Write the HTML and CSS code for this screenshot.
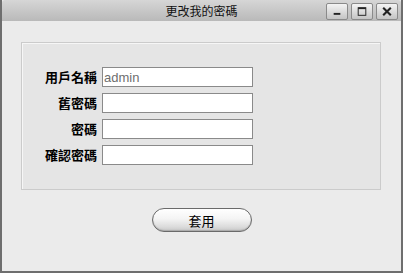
FILE: index.html
```html
<!DOCTYPE html>
<html lang="zh-Hant">
<head>
<meta charset="utf-8">
<title>更改我的密碼</title>
<link rel="stylesheet" href="styles.css">
</head>
<body>
<div class="window">
  <div class="titlebar">
    <div class="title">更改我的密碼</div>
    <div class="controls">
      <span class="ctl"><svg width="21" height="17" viewBox="0 0 21 17"><rect x="7" y="10" width="7" height="2" fill="#222"/></svg></span>
      <span class="ctl"><svg width="21" height="17" viewBox="0 0 21 17"><rect x="6.5" y="4.5" width="8" height="8" fill="none" stroke="#222" stroke-width="1"/><rect x="6.5" y="4.5" width="8" height="1.5" fill="#222"/></svg></span>
      <span class="ctl"><svg width="21" height="17" viewBox="0 0 21 17"><path d="M6.5 4.5 L14.5 12.5 M14.5 4.5 L6.5 12.5" stroke="#222" stroke-width="2.2"/></svg></span>
    </div>
  </div>
  <div class="content">
    <div class="panel">
      <div class="form">
        <label class="lbl">用戶名稱</label><input class="field" type="text" value="admin">
        <label class="lbl">舊密碼</label><input class="field" type="password">
        <label class="lbl">密碼</label><input class="field" type="password">
        <label class="lbl">確認密碼</label><input class="field" type="password">
      </div>
    </div>
    <div class="actions">
      <button class="apply">套用</button>
    </div>
  </div>
</div>
</body>
</html>
```
FILE: styles.css
```css
html, body {
  margin: 0;
  padding: 0;
  width: 403px;
  height: 273px;
  overflow: hidden;
  background: #ebebeb;
  font-family: "Noto Sans CJK TC", "Liberation Sans", sans-serif;
}
.window {
  box-sizing: border-box;
  width: 403px;
  height: 273px;
  border-left: 2px solid #6e6e6e;
  border-right: 2px solid #6e6e6e;
  border-bottom: 2px solid #6e6e6e;
  background: #ebebeb;
  display: flex;
  flex-direction: column;
}
.titlebar {
  height: 21px;
  flex: none;
  background: linear-gradient(#d6d6d6, #b9b9b9);
  border-top-left-radius: 3px;
  border-top-right-radius: 3px;
  display: flex;
  align-items: center;
  justify-content: center;
  position: relative;
}
.title {
  font-size: 12px;
  line-height: 21px;
  color: #111;
}
.controls {
  position: absolute;
  right: 3px;
  top: 3px;
  display: flex;
  gap: 3px;
}
.ctl {
  box-sizing: border-box;
  width: 22px;
  height: 17px;
  border: 1px solid #8a8a8a;
  border-radius: 2px;
  background: linear-gradient(#f4f4f4, #c4c4c4);
  display: flex;
  align-items: center;
  justify-content: center;
}
.ctl svg { display: block; }
.content {
  flex: 1;
  padding: 21px 20px 0 19px;
  display: flex;
  flex-direction: column;
}
.panel {
  box-sizing: border-box;
  height: 148px;
  border: 1px solid #cbcbcb;
  box-shadow: inset 1px 1px 0 #f6f6f6;
  background: #e5e5e5;
  padding: 24px 0 0 0;
}
.form {
  display: grid;
  grid-template-columns: 75px 151px;
  column-gap: 5px;
  row-gap: 6px;
  align-items: center;
}
.lbl {
  text-align: right;
  font-size: 13px;
  font-weight: bold;
  color: #000;
  line-height: 20px;
}
.field {
  box-sizing: border-box;
  width: 151px;
  height: 20px;
  margin: 0;
  padding: 0 1px;
  border: 1px solid #8a8a8a;
  background: #fff;
  font-family: "Liberation Sans", Arial, sans-serif;
  font-size: 13px;
  color: #6e6e6e;
  outline: none;
}
.actions {
  display: flex;
  justify-content: center;
  padding-top: 18px;
  padding-left: 1px;
}
.apply {
  box-sizing: border-box;
  width: 100px;
  height: 24px;
  border: 1px solid #6a6a6a;
  border-radius: 12px;
  background: linear-gradient(#ffffff 0%, #f4f4f4 45%, #dcdcdc 80%, #c8c8c8 100%);
  box-shadow: inset 0 -1px 1px #aaa;
  font-family: "Noto Sans CJK TC", sans-serif;
  font-size: 13px;
  color: #000;
  padding: 0;
}
```
